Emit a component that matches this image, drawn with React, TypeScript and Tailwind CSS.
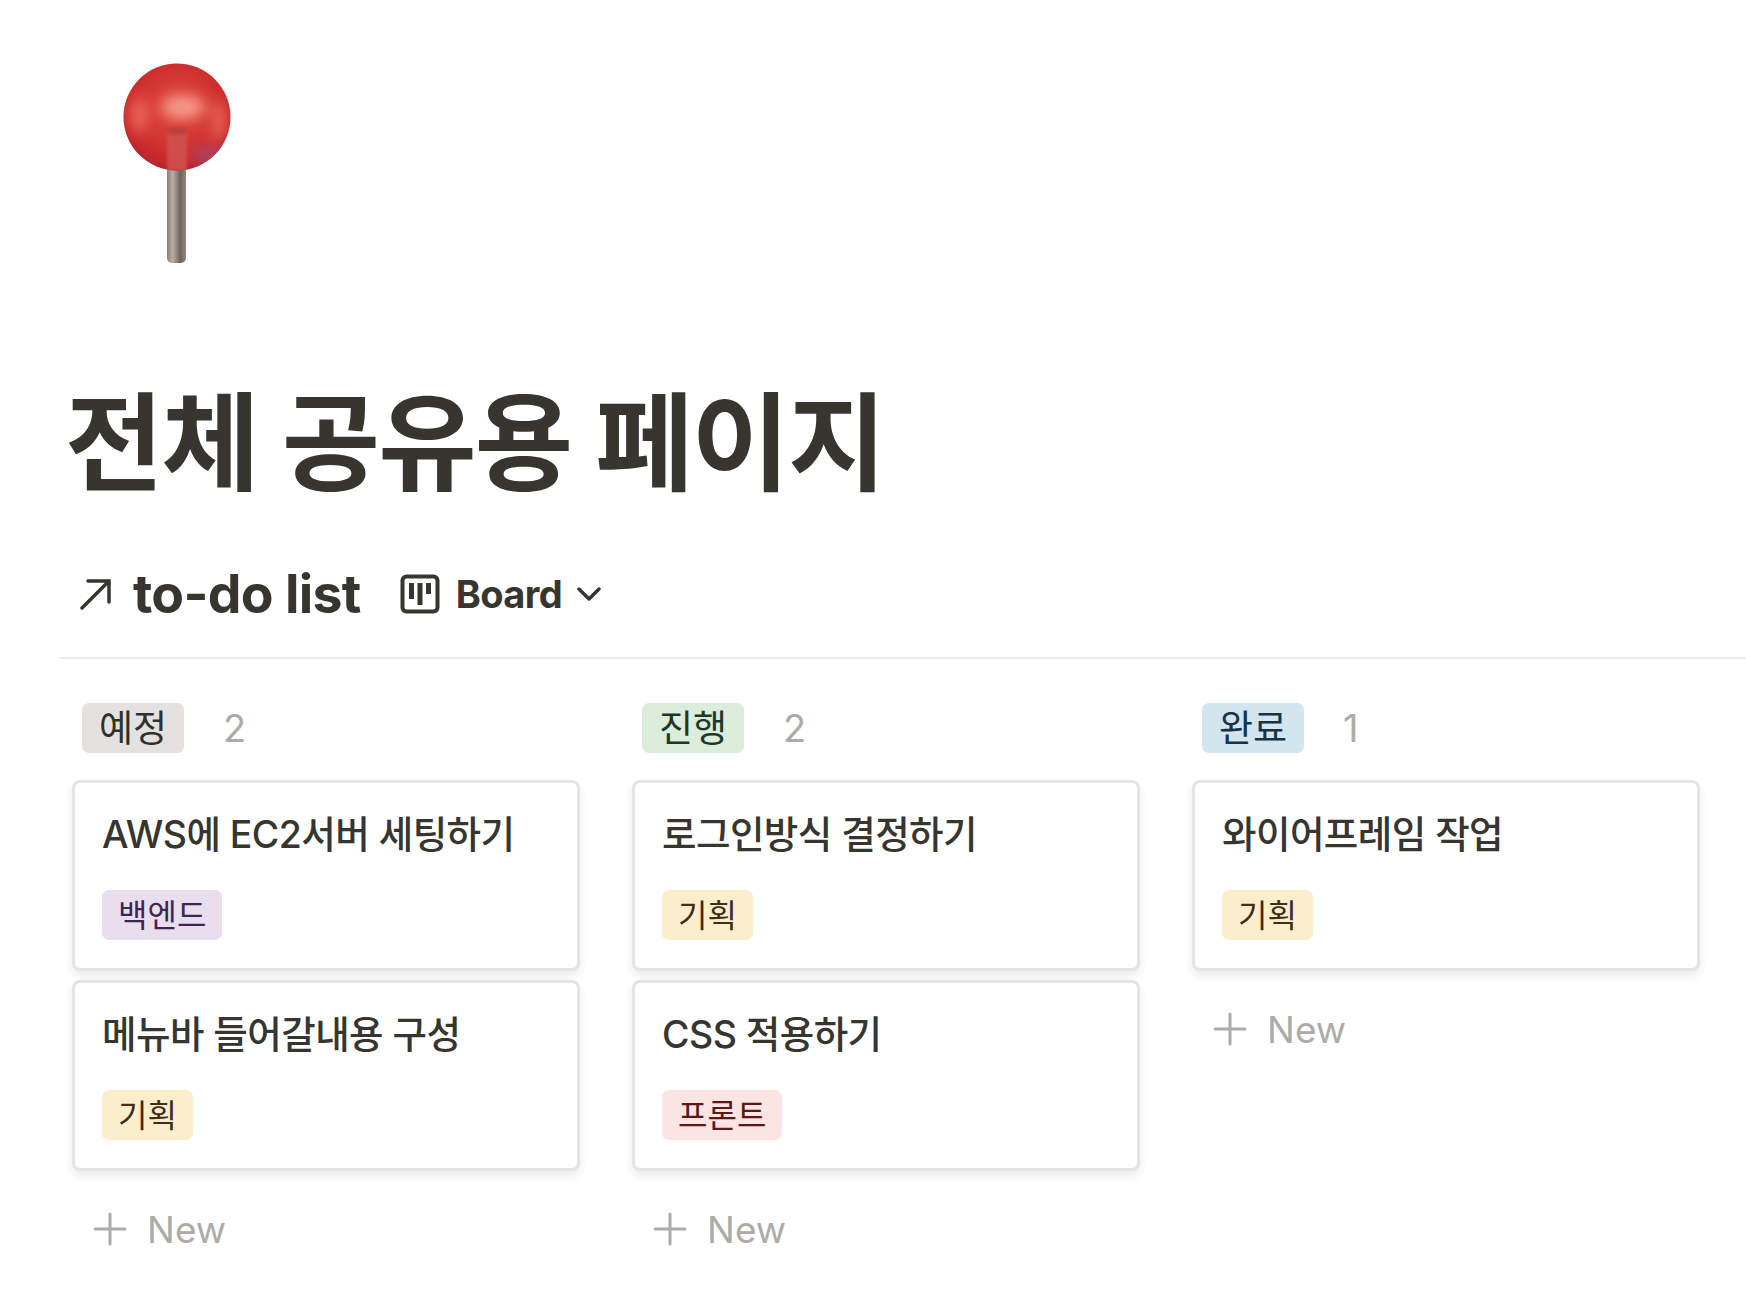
import React from 'react';

type Tag = { label: string; bg: string; text: string };

const tags: Record<string, Tag> = {
  plan: { label: '기획', bg: 'bg-[#fbeecc]', text: 'text-[#402c1b]' },
  back: { label: '백엔드', bg: 'bg-[#e8deee]', text: 'text-[#412454]' },
  front: { label: '프론트', bg: 'bg-[#fbe4e4]', text: 'text-[#5d1715]' },
};

const columns = [
  {
    name: '예정',
    pill: 'bg-[#e3e2e0] text-[#32302c]',
    count: 2,
    cards: [
      { title: 'AWS에 EC2서버 세팅하기', tag: tags.back },
      { title: '메뉴바 들어갈내용 구성', tag: tags.plan },
    ],
  },
  {
    name: '진행',
    pill: 'bg-[#dbeddb] text-[#1c3829]',
    count: 2,
    cards: [
      { title: '로그인방식 결정하기', tag: tags.plan },
      { title: 'CSS 적용하기', tag: tags.front },
    ],
  },
  {
    name: '완료',
    pill: 'bg-[#d3e5ef] text-[#183347]',
    count: 1,
    cards: [{ title: '와이어프레임 작업', tag: tags.plan }],
  },
];

const PinIcon = () => (
  <svg width="120" height="202" viewBox="0 0 120 202">
    <defs>
      <radialGradient id="ball" cx="50%" cy="42%" r="58%">
        <stop offset="0%" stopColor="#e0483f" />
        <stop offset="55%" stopColor="#d33632" />
        <stop offset="85%" stopColor="#c9282b" />
        <stop offset="100%" stopColor="#b02433" />
      </radialGradient>
      <linearGradient id="stem" x1="0" x2="1" y1="0" y2="0">
        <stop offset="0%" stopColor="#8a8078" />
        <stop offset="30%" stopColor="#b8aea6" />
        <stop offset="70%" stopColor="#6d635d" />
        <stop offset="100%" stopColor="#94897f" />
      </linearGradient>
      <filter id="soft" x="-40%" y="-40%" width="180%" height="180%">
        <feGaussianBlur stdDeviation="7" />
      </filter>
      <filter id="softer" x="-20%" y="-20%" width="140%" height="140%">
        <feGaussianBlur stdDeviation="1.5" />
      </filter>
      <clipPath id="ballClip">
        <circle cx="60" cy="54" r="53.5" />
      </clipPath>
    </defs>
    <rect x="50" y="100" width="19" height="100" rx="5" fill="url(#stem)" />
    <circle cx="60" cy="54" r="53.5" fill="url(#ball)" />
    <g clipPath="url(#ballClip)">
      <g filter="url(#soft)">
        <ellipse cx="66" cy="44" rx="22" ry="12" fill="#f79a8b" />
        <ellipse cx="22" cy="52" rx="8" ry="18" fill="#ee6a5c" />
        <ellipse cx="102" cy="58" rx="6" ry="20" fill="#ee7060" />
        <ellipse cx="92" cy="92" rx="16" ry="8" fill="#a9486a" />
      </g>
      <g filter="url(#softer)">
        <rect x="50" y="68" width="20" height="40" rx="3" fill="#d0504e" opacity="0.9" />
        <rect x="51" y="64" width="18" height="8" rx="3" fill="#a83a3e" opacity="0.55" />
      </g>
    </g>
  </svg>
);

const BoardIcon = () => (
  <svg width="40" height="40" viewBox="0 0 40 40" fill="none">
    <rect x="2.5" y="2.5" width="35" height="35" rx="4" stroke="#37352f" strokeWidth="4" />
    <rect x="9" y="9" width="5" height="16" fill="#37352f" />
    <rect x="17.5" y="9" width="5" height="22" fill="#37352f" />
    <rect x="26" y="9" width="5" height="11" fill="#37352f" />
  </svg>
);

const NewRow = () => (
  <div className="flex items-center h-[50px] pl-[21px] gap-[20px] text-[#acaba9] text-[37px] leading-none">
    <svg width="34" height="34" viewBox="0 0 34 34" stroke="#acaba9" strokeWidth="3" strokeLinecap="round">
      <path d="M17 2V32M2 17H32" />
    </svg>
    <span>New</span>
  </div>
);

export default function App() {
  return (
    <div className="w-[1746px] h-[1292px] overflow-hidden bg-white text-[#37352f] font-['Inter','Noto_Sans_CJK_KR',sans-serif]">
      <div className="pl-[117px] pt-[63px] h-[381px]">
        <PinIcon />
      </div>

      <h1 className="pl-[65px] h-[124px] text-[107px] leading-[124px] font-bold tracking-[-1.85px] whitespace-nowrap">
        전체 공유용 페이지
      </h1>

      <div className="flex items-center h-[80px] mt-[49px] pl-[80px]">
        <svg width="32" height="32" viewBox="0 0 32 32" fill="none" stroke="#37352f" strokeWidth="3.5" strokeLinecap="round">
          <path d="M2 30L29 3M8 3H29V24" />
        </svg>
        <span className="ml-[21px] text-[53.5px] font-bold leading-none tracking-[-0.7px]">to-do list</span>
        <span className="ml-[39px]"><BoardIcon /></span>
        <span className="ml-[16px] text-[38px] font-bold leading-none tracking-[-0.6px]">Board</span>
        <svg className="ml-[15px]" width="24" height="16" viewBox="0 0 24 16" fill="none" stroke="#37352f" strokeWidth="3.5" strokeLinecap="round" strokeLinejoin="round">
          <path d="M2 3L12 13L22 3" />
        </svg>
      </div>

      <div className="ml-[60px] mt-[23px] h-[2px] bg-[#ebebea]" />

      <div className="flex gap-[52px] pl-[72px] pt-[44px]">
        {columns.map((col) => (
          <div key={col.name} className="w-[508px] shrink-0">
            <div className="flex items-center h-[50px] mb-[27px]">
              <span className={`ml-[10px] flex items-center justify-center w-[102px] h-[50px] rounded-[7px] text-[37px] leading-none ${col.pill}`}>
                {col.name}
              </span>
              <span className="ml-[39px] text-[38px] leading-none text-[#acaba9]">{col.count}</span>
            </div>
            <div className="flex flex-col gap-[9px]">
              {col.cards.map((card) => (
                <div
                  key={card.title}
                  className="h-[191px] rounded-[8px] border-[3px] border-[#e4e4e2] bg-white pl-[27px] pt-[27px] shadow-[0_5px_10px_rgba(15,15,15,0.08)]"
                >
                  <div className="h-[50px] text-[37.5px] leading-[50px] font-medium tracking-[-0.55px] whitespace-nowrap">{card.title}</div>
                  <div className="mt-[30px]">
                    <span className={`inline-flex items-center h-[50px] px-[16px] pt-[2px] rounded-[7px] text-[32px] leading-none ${card.tag.bg} ${card.tag.text}`}>
                      {card.tag.label}
                    </span>
                  </div>
                </div>
              ))}
            </div>
            <div className="mt-[33px]">
              <NewRow />
            </div>
          </div>
        ))}
      </div>
    </div>
  );
}
